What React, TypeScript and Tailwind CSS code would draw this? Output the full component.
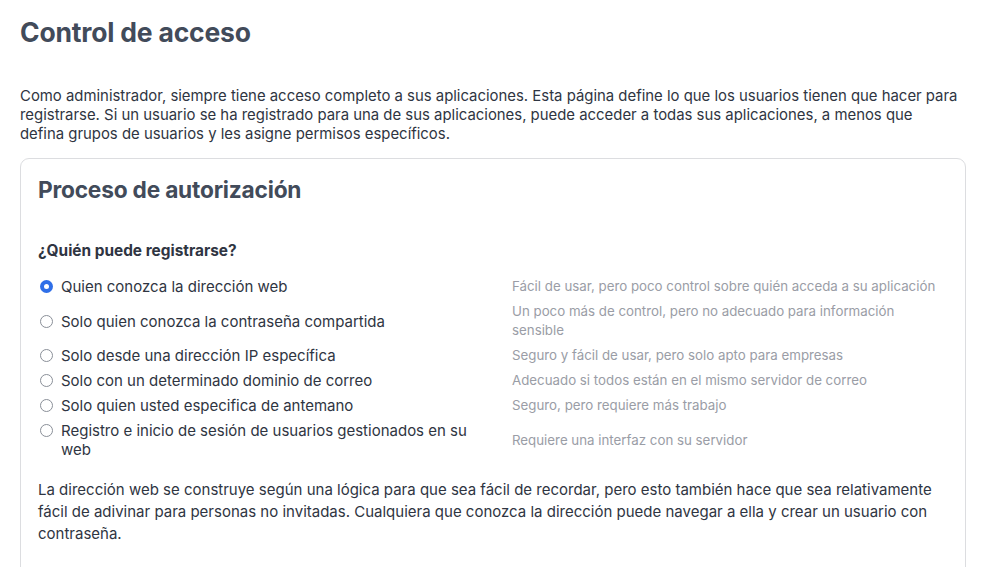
import { useState } from "react";

type Option = {
  id: string;
  label: string;
  hint: string;
};

const options: Option[] = [
  {
    id: "url",
    label: "Quien conozca la dirección web",
    hint: "Fácil de usar, pero poco control sobre quién acceda a su aplicación",
  },
  {
    id: "password",
    label: "Solo quien conozca la contraseña compartida",
    hint: "Un poco más de control, pero no adecuado para información sensible",
  },
  {
    id: "ip",
    label: "Solo desde una dirección IP específica",
    hint: "Seguro y fácil de usar, pero solo apto para empresas",
  },
  {
    id: "domain",
    label: "Solo con un determinado dominio de correo",
    hint: "Adecuado si todos están en el mismo servidor de correo",
  },
  {
    id: "invite",
    label: "Solo quien usted especifica de antemano",
    hint: "Seguro, pero requiere más trabajo",
  },
  {
    id: "sso",
    label: "Registro e inicio de sesión de usuarios gestionados en su web",
    hint: "Requiere una interfaz con su servidor",
  },
];

function Radio({ checked }: { checked: boolean }) {
  if (checked) {
    return (
      <span className="flex h-[13px] w-[13px] shrink-0 items-center justify-center rounded-full bg-[#2f6fe8]">
        <span className="h-[5px] w-[5px] rounded-full bg-white" />
      </span>
    );
  }
  return (
    <span className="h-[13px] w-[13px] shrink-0 rounded-full border border-[#8a8f98] bg-white" />
  );
}

export default function App() {
  const [selected, setSelected] = useState("url");

  return (
    <div className="min-h-screen bg-white px-[20px] pt-[16px] font-['Inter','Liberation_Sans',sans-serif] text-[#2f3542]">
      <h1 className="text-[26.5px] font-bold leading-[32px] tracking-[-0.2px] text-[#424b5a]">
        Control de acceso
      </h1>

      <p className="mt-[39px] w-[940px] text-[14.9px] leading-[19px] text-[#2f3542]">
        Como administrador, siempre tiene acceso completo a sus aplicaciones. Esta página define lo que los usuarios
        tienen que hacer para registrarse. Si un usuario se ha registrado para una de sus aplicaciones, puede acceder a
        todas sus aplicaciones, a menos que defina grupos de usuarios y les asigne permisos específicos.
      </p>

      <section className="mt-[14px] w-[946px] rounded-[9px] border border-[#dcdde0] px-[17px] pt-[16px] pb-[30px]">
        <h2 className="text-[22.7px] font-bold leading-[30px] tracking-[-0.2px] text-[#424b5a]">
          Proceso de autorización
        </h2>

        <h3 className="mt-[36px] text-[15.4px] font-bold leading-[20px] text-[#2f3542]">
          ¿Quién puede registrarse?
        </h3>

        <div className="mt-[16px] grid grid-cols-[455px_1fr] gap-x-[19px] gap-y-[6px]">
          {options.map((o) => (
            <div key={o.id} className="contents">
              <label
                className="flex cursor-pointer items-start gap-[8px] pl-[2px] self-center"
                onClick={() => setSelected(o.id)}
              >
                <span className="flex h-[19px] items-center">
                  <Radio checked={selected === o.id} />
                </span>
                <span className="pr-[20px] text-[15px] leading-[19px] text-[#2f3542]">{o.label}</span>
              </label>
              <span className="self-center pr-[6px] text-[13.3px] leading-[19px] text-[#9a9da6]">{o.hint}</span>
            </div>
          ))}
        </div>

        <p className="mt-[20px] text-[15px] leading-[22px] text-[#2f3542]">
          La dirección web se construye según una lógica para que sea fácil de recordar, pero esto también hace que
          sea relativamente fácil de adivinar para personas no invitadas. Cualquiera que conozca la dirección puede
          navegar a ella y crear un usuario con contraseña.
        </p>
      </section>
    </div>
  );
}
